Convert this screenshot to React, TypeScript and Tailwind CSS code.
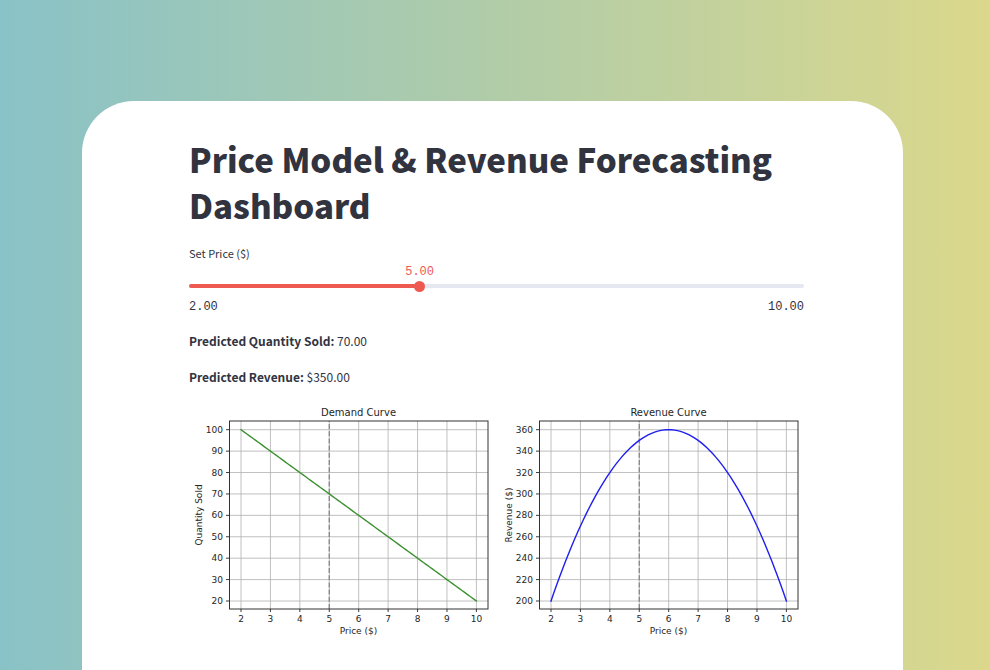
import { useState } from "react";

const MIN_PRICE = 2;
const MAX_PRICE = 10;
const PRICES = [2, 3, 4, 5, 6, 7, 8, 9, 10];

const quantityAt = (price: number) => 120 - 10 * price;
const revenueAt = (price: number) => price * quantityAt(price);

type PlotProps = {
  left: number;
  title: string;
  yLabel: string;
  yLabelX: number;
  ticks: number[];
  color: string;
  value: (price: number) => number;
  price: number;
};

const TOP = 21;
const BOTTOM = 209;
const PLOT_WIDTH = 259;

function Plot({ left, title, yLabel, yLabelX, ticks, color, value, price }: PlotProps) {
  const low = ticks[0];
  const high = ticks[ticks.length - 1];
  const x = (p: number) => left + 12 + ((p - MIN_PRICE) / (MAX_PRICE - MIN_PRICE)) * 235.4;
  const y = (v: number) => 201 - ((v - low) / (high - low)) * 171.3;
  const center = left + PLOT_WIDTH / 2;
  const points = Array.from({ length: 81 }, (_, i) => {
    const p = MIN_PRICE + i / 10;
    return `${x(p)},${y(value(p))}`;
  }).join(" ");

  return (
    <g fill="#262626">
      <g stroke="#b0b0b0" strokeWidth="0.8">
        {PRICES.map((p) => (
          <line key={p} x1={x(p)} x2={x(p)} y1={TOP} y2={BOTTOM} />
        ))}
        {ticks.map((t) => (
          <line key={t} x1={left} x2={left + PLOT_WIDTH} y1={y(t)} y2={y(t)} />
        ))}
      </g>
      <line x1={x(price)} x2={x(price)} y1={BOTTOM} y2={TOP} stroke="#858585" strokeWidth="1.3" strokeDasharray="5 2.2" />
      <polyline points={points} fill="none" stroke={color} strokeWidth="1.4" strokeLinecap="square" />
      <rect x={left + 0.5} y={TOP} width={PLOT_WIDTH - 0.5} height={BOTTOM - TOP} fill="none" stroke="#333333" strokeWidth="1" />
      <g stroke="#262626" strokeWidth="0.9">
        {PRICES.map((p) => (
          <line key={p} x1={x(p)} x2={x(p)} y1={BOTTOM} y2={BOTTOM + 3} />
        ))}
        {ticks.map((t) => (
          <line key={t} x1={left - 3} x2={left} y1={y(t)} y2={y(t)} />
        ))}
      </g>
      <g fontSize="9" textAnchor="middle">
        {PRICES.map((p) => (
          <text key={p} x={x(p)} y="222">{p}</text>
        ))}
        <text x={center} y="234">Price ($)</text>
        <text transform={`translate(${yLabelX} 115) rotate(-90)`}>{yLabel}</text>
      </g>
      <g fontSize="9" textAnchor="end">
        {ticks.map((t) => (
          <text key={t} x={left - 6} y={y(t) + 3}>{t}</text>
        ))}
      </g>
      <text x={center} y="16" fontSize="10" textAnchor="middle">{title}</text>
    </g>
  );
}

export default function App() {
  const [price, setPrice] = useState(5);
  const percent = ((price - MIN_PRICE) / (MAX_PRICE - MIN_PRICE)) * 100;

  return (
    <div className="flex min-h-screen flex-col bg-linear-to-r from-[#89c2c7] via-[#b0cca8] to-[#dbd88b] pt-[101px] pr-[87px] pl-[82px] font-['Noto_Sans_CJK_SC',sans-serif] text-[#31333f]">
      <main className="flex-1 rounded-t-[52px] bg-white pt-[35px] pr-[99px] pl-[107px]">
        <h1 className="text-[33px] leading-[46px] font-black">Price Model &amp; Revenue Forecasting Dashboard</h1>

        <div className="pt-[17px]">
          <label htmlFor="price" className="block text-[11px] leading-4">Set Price ($)</label>
          <div className="relative h-[23px] font-['Liberation_Mono',monospace] text-xs text-[#ee5a52]">
            <output htmlFor="price" className="absolute bottom-1.5 -translate-x-1/2 leading-3" style={{ left: `${percent}%` }}>
              {price.toFixed(2)}
            </output>
          </div>
          <div className="relative h-1 rounded-full bg-[#e5e8f0]">
            <div className="h-1 rounded-full bg-[#ee5a52]" style={{ width: `${percent}%` }} />
            <input
              id="price"
              type="range"
              min={MIN_PRICE}
              max={MAX_PRICE}
              step={0.1}
              value={price}
              onChange={(e) => setPrice(Number(e.target.value))}
              className="absolute -top-1 -left-[5px] h-3 w-[calc(100%+10px)] cursor-pointer appearance-none bg-transparent [&::-webkit-slider-thumb]:size-[11px] [&::-webkit-slider-thumb]:appearance-none [&::-webkit-slider-thumb]:rounded-full [&::-webkit-slider-thumb]:bg-[#ee5a52]"
            />
          </div>
          <div className="flex justify-between pt-[11px] font-['Liberation_Mono',monospace] text-xs leading-4">
            <span>2.00</span>
            <span>10.00</span>
          </div>
        </div>

        <div className="flex flex-col gap-4 pt-4 text-xs leading-5">
          <p><strong className="font-bold">Predicted Quantity Sold:</strong> {quantityAt(price).toFixed(2)}</p>
          <p><strong className="font-bold">Predicted Revenue:</strong> ${revenueAt(price).toFixed(2)}</p>
        </div>

        <svg viewBox="0 0 615 240" className="mt-[13px] block w-full font-['DejaVu_Sans',sans-serif]" role="img" aria-label="Demand Curve, Revenue Curve">
          <Plot left={40} title="Demand Curve" yLabel="Quantity Sold" yLabelX={13} ticks={[20, 30, 40, 50, 60, 70, 80, 90, 100]} color="#3c9130" value={quantityAt} price={price} />
          <Plot left={350} title="Revenue Curve" yLabel="Revenue ($)" yLabelX={323} ticks={[200, 220, 240, 260, 280, 300, 320, 340, 360]} color="#1f1ff0" value={revenueAt} price={price} />
        </svg>
      </main>
    </div>
  );
}
